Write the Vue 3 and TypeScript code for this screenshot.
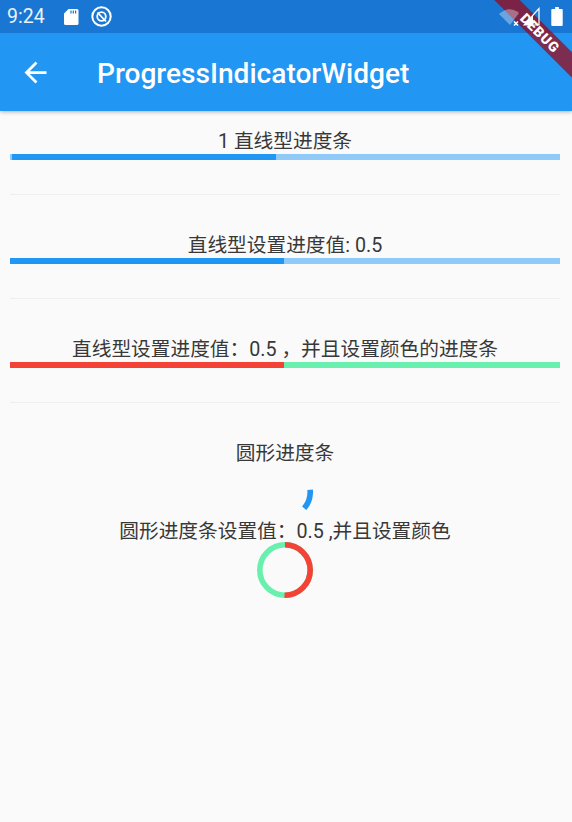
<script setup lang="ts">
const R = 25.2
const C = 2 * Math.PI * R
const spin = `${(C * 45) / 360} ${C}`
const half = `${C / 2} ${C}`
</script>

<template>
  <div class="page">
    <header class="header">
      <div class="status">
        <span class="time">9:24</span>
        <svg class="ic sd" viewBox="0 0 16 18" width="16" height="18">
          <path d="M5.500 1H14a1.500 1.500 0 0 1 1.500 1.500v13A1.500 1.500 0 0 1 14 17H2.500A1.500 1.500 0 0 1 1 15.500V5.500z" fill="#fff" />
          <path d="M8 2.500v3M10.300 2.500v3M12.600 2.500v3" stroke="#1976d2" stroke-width="1.200" />
        </svg>
        <svg class="ic at" viewBox="0 0 21 21" width="21" height="21">
          <circle cx="10.500" cy="10.500" r="9.200" fill="none" stroke="#fff" stroke-width="2" />
          <circle cx="10.500" cy="10.500" r="4.300" fill="none" stroke="#fff" stroke-width="1.800" />
          <path d="M6.500 6.500 15 15.500" stroke="#fff" stroke-width="1.800" />
        </svg>
        <span class="grow"></span>
        <svg class="ic wifi" viewBox="0 0 26 18" width="26" height="18">
          <path d="M0 6 Q10 -3 20 5 L11 17z" fill="#fff" opacity=".35" />
          <path d="M15 13.500l4 4M19 13.500l-4 4" stroke="#fff" stroke-width="1.500" />
        </svg>
        <svg class="ic signal" viewBox="0 0 18 20" width="18" height="20">
          <path d="M16 1.500V18H1z" fill="none" stroke="#fff" stroke-width="1.200" />
          <path d="M10 18V8L1 18z" fill="#fff" />
        </svg>
        <svg class="ic battery" viewBox="0 0 12 20" width="12" height="19">
          <path d="M4 0h4v2h3a1 1 0 0 1 1 1v16a1 1 0 0 1-1 1H1a1 1 0 0 1-1-1V3a1 1 0 0 1 1-1h3z" fill="#fff" />
        </svg>
      </div>
      <div class="bar">
        <svg class="back" viewBox="0 0 24 24" width="33" height="33">
          <path d="M20 11H7.830l5.590-5.590L12 4l-8 8 8 8 1.410-1.410L7.830 13H20z" fill="#fff" />
        </svg>
        <h1 class="title">ProgressIndicatorWidget</h1>
      </div>
    </header>

    <main class="body">
      <section class="sec">
        <p class="label">1 直线型进度条</p>
        <div class="track blue"><div class="fill blue-fill first"></div></div>
      </section>
      <section class="sec">
        <p class="label">直线型设置进度值: 0.5</p>
        <div class="track blue"><div class="fill blue-fill half"></div></div>
      </section>
      <section class="sec">
        <p class="label">直线型设置进度值：0.5 ，并且设置颜色的进度条</p>
        <div class="track green"><div class="fill red half"></div></div>
      </section>
      <p class="label circ-label">圆形进度条</p>
      <svg class="ring" viewBox="0 0 56 56" width="56" height="56">
        <circle class="spin" cx="28" cy="28" :r="R" fill="none" stroke="#2196f3" stroke-width="5.600" :stroke-dasharray="spin" />
      </svg>
      <p class="label">圆形进度条设置值：0.5 ,并且设置颜色</p>
      <svg class="ring" viewBox="0 0 56 56" width="56" height="56">
        <circle cx="28" cy="28" :r="R" fill="none" stroke="#69f0ae" stroke-width="5.600" />
        <circle class="half-arc" cx="28" cy="28" :r="R" fill="none" stroke="#f44336" stroke-width="5.600" :stroke-dasharray="half" />
      </svg>
    </main>

    <div class="ribbon">DEBUG</div>
  </div>
</template>

<style>
body { margin: 0; }
</style>

<style scoped>
.page {
  position: relative;
  width: 572px;
  height: 822px;
  overflow: hidden;
  background: #fafafa;
  font-family: Roboto, "Noto Sans CJK SC", sans-serif;
  color: #383838;
}
.header {
  background: #2196f3;
  box-shadow: 0 1px 4px rgba(0, 0, 0, .3);
  position: relative;
}
.status {
  height: 33px;
  background: #1976d2;
  display: flex;
  align-items: center;
  padding: 0 9px 0 7px;
  color: #fff;
  box-sizing: border-box;
}
.time { font-size: 19.500px; width: 56px; color: #eaf2fb; }
.ic { display: block; flex: none; }
.sd { margin-right: 12px; }
.grow { flex: 1; }
.wifi { margin-right: -2px; margin-top: 1px; position: relative; z-index: 1; }
.signal { margin-right: 10px; position: relative; z-index: 1; }
.bar {
  height: 78px;
  display: flex;
  align-items: center;
  padding-left: 19px;
}
.back { display: block; flex: none; margin-right: 45px; }
.title {
  margin: 0;
  padding-top: 2px;
  font-size: 28.100px;
  font-weight: 500;
  color: #fff;
}
.body {
  display: flex;
  flex-direction: column;
  align-items: center;
  padding-right: 2px;
}
.sec {
  width: 550px;
  height: 84px;
  margin-bottom: 20px;
  box-sizing: border-box;
  padding-top: 19px;
  border-bottom: 1px solid #eeeeee;
}
.label {
  margin: 0;
  padding-top: 2px;
  font-size: 19.700px;
  line-height: 20px;
  text-align: center;
  white-space: nowrap;
}
.track { height: 5.500px; margin-top: 2px; overflow: hidden; }
.blue { background: #90caf9; }
.green { background: #69f0ae; }
.fill { height: 100%; }
.blue-fill { background: #2196f3; }
.red { background: #f44336; }
.half { width: 49.900%; }
.first { width: 48%; margin-left: 2px; }
.circ-label { margin-top: 19px; }
.ring { display: block; flex: none; }
.spin { transform: rotate(-5deg); transform-origin: 28px 28px; }
.half-arc { transform: rotate(-90deg); transform-origin: 28px 28px; }
.ribbon {
  position: absolute;
  top: 24px;
  right: -38px;
  width: 140px;
  height: 18px;
  line-height: 18px;
  transform: rotate(45deg);
  background: rgba(165, 0, 10, .7);
  color: #fff;
  font-size: 14px;
  font-weight: 900;
  letter-spacing: .8px;
  text-align: center;
}
</style>
